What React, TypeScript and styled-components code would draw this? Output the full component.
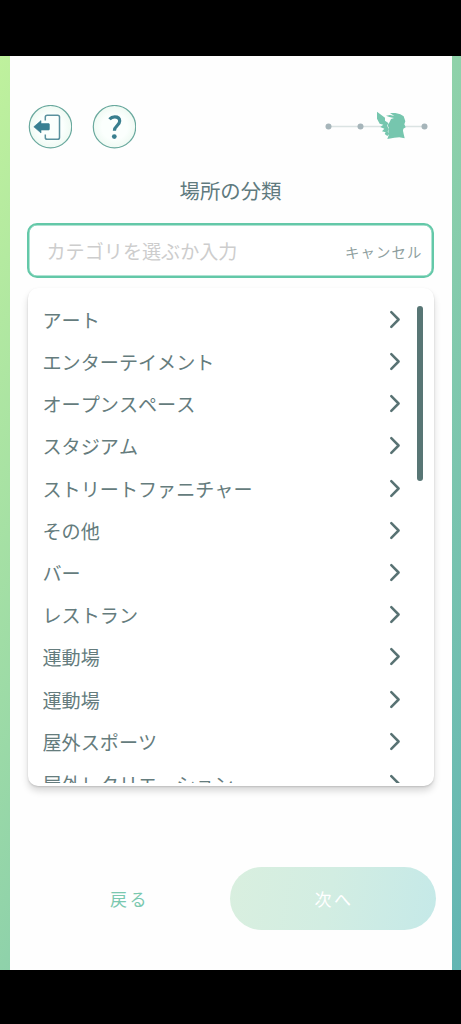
import React from 'react';
import styled, { createGlobalStyle } from 'styled-components';

const GlobalStyle = createGlobalStyle`
  * { box-sizing: border-box; }
  body {
    margin: 0;
    background: #000;
    font-family: "Noto Sans CJK JP", "Noto Sans", sans-serif;
    font-kerning: none;
  }
  button { font-family: inherit; font-kerning: none; border: 0; padding: 0; background: none; }
`;

const Screen = styled.div`
  width: 461px;
  height: 1024px;
  padding: 56px 0 54px;
  background: #000;
  overflow: hidden;
`;

const Backdrop = styled.div`
  height: 914px;
  padding: 0 9px 0 10px;
  background: linear-gradient(to bottom right, #bff19d, #8fd2aa 50%, #62b5b3);
`;

const Page = styled.main`
  height: 100%;
  display: flex;
  flex-direction: column;
  padding: 49px 18px 0 17px;
  background: #fefefe;
`;

const TopBar = styled.header`
  height: 44px;
  display: flex;
  align-items: center;
  gap: 20px;
  padding-left: 1px;
`;

const RoundButton = styled.button`
  width: 44px;
  height: 44px;
  display: block;
`;

const Progress = styled.svg`
  width: 112px;
  height: 44px;
  margin: 0 -2px 0 auto;
  flex: none;
`;

const Title = styled.h1`
  margin: 25px 0 0;
  height: 32px;
  line-height: 32px;
  font-size: 20.4px;
  font-weight: 400;
  color: #607a7e;
  text-align: center;
`;

const SearchBox = styled.div`
  height: 55px;
  margin-top: 17px;
  padding: 0 9.5px 0 17.5px;
  display: flex;
  align-items: center;
  justify-content: space-between;
  border: 2px solid #63c8a8;
  box-shadow: inset 0 0 0 0.5px #63c8a8;
  border-radius: 10px;
  background: #fff;
`;

const Placeholder = styled.span`
  font-size: 19.1px;
  line-height: 28px;
  color: #cdcdcd;
`;

const Cancel = styled.button`
  font-size: 14.4px;
  letter-spacing: 1.1px;
  line-height: 24px;
  margin-top: 2px;
  color: #8f9f9f;
`;

const Dropdown = styled.div`
  height: 498px;
  margin: 10px 0 0 1px;
  padding: 10px 11px 3px 14.5px;
  display: flex;
  border-radius: 10px;
  background: #fff;
  box-shadow: 0 5px 7px rgba(0, 0, 0, 0.15), 0 1px 2px rgba(0, 0, 0, 0.14);
`;

const List = styled.ul`
  flex: 1;
  margin: 0;
  padding: 0.8px 0 0;
  list-style: none;
  overflow: hidden;
`;

const Row = styled.li`
  height: 42.2px;
  padding-right: 16px;
  display: flex;
  align-items: center;
  justify-content: space-between;
  font-size: 19.1px;
  line-height: 28px;
  color: #657c7d;
`;

const ScrollThumb = styled.div`
  width: 6px;
  height: 175px;
  margin-top: 8px;
  border-radius: 3px;
  background: #587675;
`;

const Actions = styled.footer`
  display: flex;
  align-items: center;
  margin-top: 81px;
`;

const BackButton = styled.button`
  flex: 1;
  padding-left: 2px;
  font-size: 17px;
  letter-spacing: 2.4px;
  line-height: 28px;
  color: #7ac8af;
`;

const NextButton = styled.button`
  width: 206px;
  height: 63px;
  margin-right: -2px;
  padding-left: 2px;
  border-radius: 32px;
  font-size: 17px;
  letter-spacing: 2.4px;
  line-height: 28px;
  color: #fff;
  background: linear-gradient(100deg, #d9efdf, #d2ede2 48%, #c5e9e8);
`;

const categories = [
  'アート',
  'エンターテイメント',
  'オープンスペース',
  'スタジアム',
  'ストリートファニチャー',
  'その他',
  'バー',
  'レストラン',
  '運動場',
  '運動場',
  '屋外スポーツ',
  '屋外レクリエーション',
];

const Disc = () => (
  <>
    <defs>
      <radialGradient id="disc">
        <stop offset="0.6" stopColor="#fbfffd" />
        <stop offset="1" stopColor="#effaf3" />
      </radialGradient>
    </defs>
    <circle cx="22.5" cy="21.7" r="21.2" fill="url(#disc)" stroke="#6aa99e" strokeWidth="1.2" />
  </>
);

const ExitIcon = () => (
  <svg width="44" height="44" viewBox="0 0 44 44" fill="none">
    <Disc />
    <path
      d="M17.3 15.5v-3.4c0-1.2.7-1.9 1.9-1.9h10.4c1.2 0 1.9.7 1.9 1.9v20.3c0 1.2-.7 1.9-1.9 1.9H19.2c-1.2 0-1.9-.7-1.9-1.9v-3"
      stroke="#5a919e"
      strokeWidth="1.5"
    />
    <path
      d="M5.800 21.800l7.200-6.200v3h7.700c.4 0 .7.300.7.700v5c0 .4-.3.700-.7.700H13v3z"
      fill="#397f92"
      stroke="#397f92"
      strokeWidth=".6"
      strokeLinejoin="round"
    />
  </svg>
);

const HelpIcon = () => (
  <svg width="44" height="44" viewBox="0 0 44 44" fill="none">
    <Disc />
    <path d="M17.5 14.2c1.2-1.4 3-2.400 5.200-2.400 3 0 5 1.500 5 4.300 0 4.500-5.300 4.700-5.300 9.600" stroke="#397f8f" strokeWidth="3.2" />
    <circle cx="22.3" cy="31.6" r="2.4" fill="#397f8f" />
  </svg>
);

const Chevron = () => (
  <svg width="12" height="20" viewBox="0 0 12 20" fill="none">
    <path d="M2.3 2.200l7.300 7.300-7.300 7.300" stroke="#587273" strokeWidth="2.5" strokeLinecap="round" strokeLinejoin="round" />
  </svg>
);

const Steps = () => (
  <Progress viewBox="0 0 112 44">
    <path d="M4.5 21.5H101" stroke="#dbe3e3" strokeWidth="1.7" />
    <circle cx="4.5" cy="21.5" r="3" fill="#a6b5ba" />
    <circle cx="36.5" cy="21.5" r="3" fill="#a6b5ba" />
    <circle cx="100.5" cy="21.5" r="3" fill="#a6b5ba" />
    <g transform="translate(-14 -15) scale(.33333)" fill="#76c6ae">
      <path d="M201 65L225 83L225 92L235 99L231 108L237 117L233 125L238 131L232 138L224 132L227 127L216 124L223 116L211 111L220 104L209 101L201 86Z" />
      <path d="M228 77L240 75L253 78L240 69L256 69L271 73L281 79L286 94L283 103L287 112L280 116L279 122L281 132L284 145L268 142L253 143L232 147L236 136L235 124L237 115L233 105L239 96L243 87L252 84L238 81Z" />
    </g>
  </Progress>
);

export default function App() {
  return (
    <Screen>
      <GlobalStyle />
      <Backdrop>
        <Page>
          <TopBar>
            <RoundButton aria-label="終了"><ExitIcon /></RoundButton>
            <RoundButton aria-label="ヘルプ"><HelpIcon /></RoundButton>
            <Steps />
          </TopBar>
          <Title>場所の分類</Title>
          <SearchBox>
            <Placeholder>カテゴリを選ぶか入力</Placeholder>
            <Cancel>キャンセル</Cancel>
          </SearchBox>
          <Dropdown>
            <List>
              {categories.map((name, i) => (
                <Row key={i}>
                  {name}
                  <Chevron />
                </Row>
              ))}
            </List>
            <ScrollThumb />
          </Dropdown>
          <Actions>
            <BackButton>戻る</BackButton>
            <NextButton>次へ</NextButton>
          </Actions>
        </Page>
      </Backdrop>
    </Screen>
  );
}
